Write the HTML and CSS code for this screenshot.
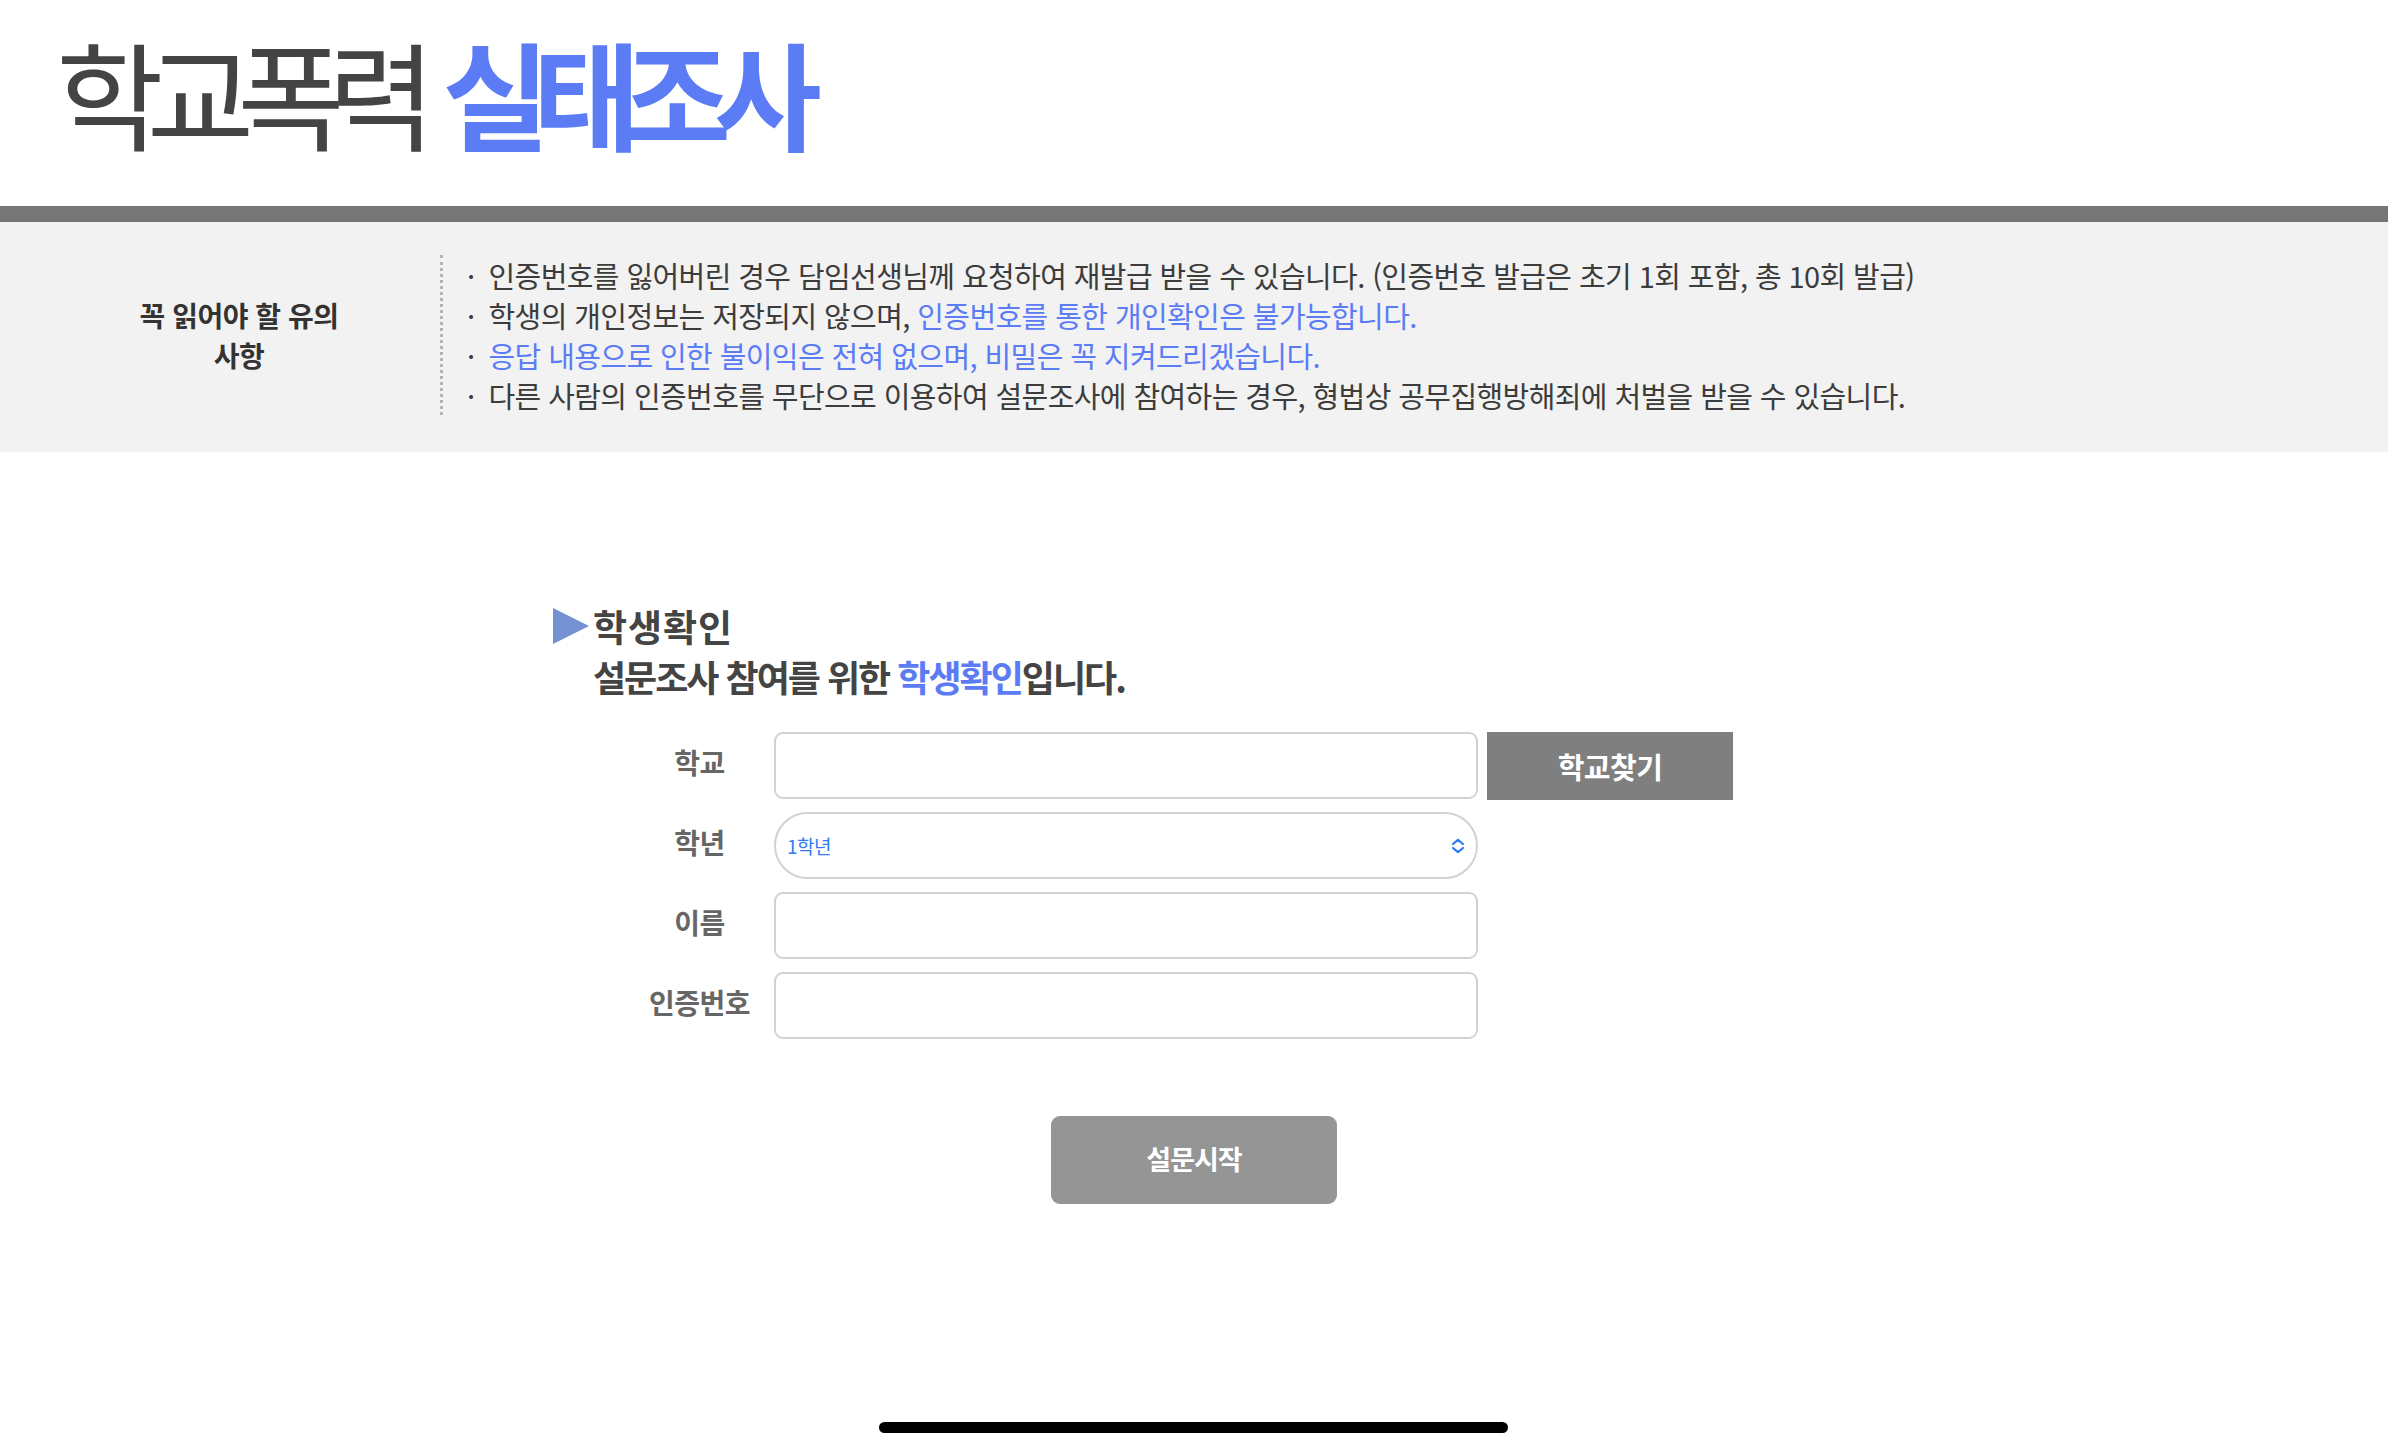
FILE: index.html
```html
<!DOCTYPE html>
<html lang="ko">
<head>
<meta charset="utf-8">
<title>학교폭력 실태조사</title>
<link rel="stylesheet" href="styles.css">
</head>
<body>
<header class="top">
  <h1 class="title"><span class="title-dark">학교폭력</span> <span class="title-blue">실태조사</span></h1>
</header>
<div class="rule"></div>
<section class="notice">
  <div class="notice-label"><p class="notice-label-text">꼭 읽어야 할 유의 사항</p></div>
  <ul class="notice-list">
    <li><span class="dot">·</span>인증번호를 잃어버린 경우 담임선생님께 요청하여 재발급 받을 수 있습니다. (인증번호 발급은 초기 1회 포함, 총 10회 발급)</li>
    <li><span class="dot">·</span>학생의 개인정보는 저장되지 않으며, <span class="blue">인증번호를 통한 개인확인은 불가능합니다.</span></li>
    <li><span class="dot">·</span><span class="blue">응답 내용으로 인한 불이익은 전혀 없으며, 비밀은 꼭 지켜드리겠습니다.</span></li>
    <li><span class="dot">·</span>다른 사람의 인증번호를 무단으로 이용하여 설문조사에 참여하는 경우, 형법상 공무집행방해죄에 처벌을 받을 수 있습니다.</li>
  </ul>
</section>
<main class="verify">
  <h2 class="verify-title"><span class="tri"></span>학생확인</h2>
  <p class="verify-sub">설문조사 참여를 위한 <span class="blue">학생확인</span>입니다.</p>
  <div class="form">
    <div class="row">
      <span class="label">학교</span>
      <div class="field"></div>
      <button class="find" type="button">학교찾기</button>
    </div>
    <div class="row">
      <span class="label">학년</span>
      <div class="field select">
        <span class="select-value">1학년</span>
        <svg class="chev" width="16" height="16" viewBox="0 0 16 16"><path d="M3 6 L8 1.8 L13 6 M3 10 L8 14.2 L13 10" fill="none" stroke="#2f7bf5" stroke-width="2.2" stroke-linecap="round" stroke-linejoin="round"/></svg>
      </div>
    </div>
    <div class="row">
      <span class="label">이름</span>
      <div class="field"></div>
    </div>
    <div class="row">
      <span class="label">인증번호</span>
      <div class="field"></div>
    </div>
  </div>
  <div class="actions"><button class="start" type="button">설문시작</button></div>
</main>
<div class="home-indicator"></div>
</body>
</html>
```
FILE: styles.css
```css
* { box-sizing: border-box; }
html, body { margin: 0; padding: 0; background: #fff; }
body {
  font-family: "Noto Sans CJK KR", "Noto Sans", sans-serif;
  color: #3c3c3c;
  width: 2388px;
  height: 1448px;
  overflow: hidden;
}
.blue { color: #5b7cf5; }

.top {
  height: 206px;
  padding: 33px 0 0 56px;
}
.title {
  margin: 0;
  font-size: 117px;
  line-height: 1;
  font-weight: 400;
  letter-spacing: -17px;
  word-spacing: 8px;
  white-space: nowrap;
}
.title-dark { color: #444; }
.title-blue { color: #5b7cf5; font-weight: 700; }

.rule { height: 16px; background: #767676; }

.notice {
  display: flex;
  background: #f2f2f2;
  padding: 33px 0 37px;
}
.notice-label {
  width: 440px;
  padding-left: 38px;
  display: flex;
  align-items: center;
  justify-content: center;
}
.notice-label-text {
  margin: 0;
  width: 220px;
  text-align: center;
  font-size: 28px;
  font-weight: 700;
  line-height: 40px;
  color: #333;
  letter-spacing: -0.5px;
}
.notice-list {
  margin: 0;
  padding: 0 0 0 24px;
  list-style: none;
  border-left: 3px dotted #b4b4b4;
  font-size: 29px;
  line-height: 40px;
  letter-spacing: -0.6px;
  color: #3c3c3c;
  white-space: nowrap;
}
.dot { margin-right: 14px; }

.verify {
  width: 1282px;
  margin: 149px auto 0;
}
.verify-title {
  margin: 0;
  display: flex;
  align-items: center;
  font-size: 37px;
  line-height: 50px;
  font-weight: 700;
  color: #444;
  letter-spacing: 1px;
}
.tri {
  width: 0;
  height: 0;
  border-top: 18px solid transparent;
  border-bottom: 18px solid transparent;
  border-left: 36px solid #7591d1;
  margin-right: 4px;
}
.verify-sub {
  margin: 0;
  padding-left: 40px;
  font-size: 36px;
  line-height: 50px;
  font-weight: 700;
  color: #444;
  letter-spacing: -2px;
}

.form {
  margin-top: 31px;
  display: flex;
  flex-direction: column;
  gap: 13px;
  padding-left: 72px;
}
.row {
  display: flex;
  align-items: center;
  height: 67px;
}
.label {
  width: 149px;
  text-align: center;
  font-size: 28px;
  font-weight: 700;
  color: #666;
  letter-spacing: -0.5px;
  margin-top: -8px;
}
.field {
  width: 704px;
  height: 67px;
  border: 2px solid #d2d2d2;
  border-radius: 9px;
  background: #fff;
}
.select {
  border-radius: 34px;
  display: flex;
  align-items: center;
  justify-content: space-between;
  padding: 0 10px 0 11px;
}
.select-value {
  font-size: 19px;
  color: #2f7bf5;
  letter-spacing: -0.5px;
}
.chev { display: block; }
.find {
  margin-left: 9px;
  width: 246px;
  height: 68px;
  border: 0;
  background: #7f7f7f;
  color: #fff;
  font-family: inherit;
  font-size: 29px;
  font-weight: 700;
  letter-spacing: -0.5px;
  padding: 0;
}
.actions {
  display: flex;
  justify-content: center;
  margin-top: 77px;
}
.start {
  width: 286px;
  height: 88px;
  border: 0;
  border-radius: 9px;
  background: #959595;
  color: #fff;
  font-family: inherit;
  font-size: 27px;
  font-weight: 700;
  letter-spacing: -1px;
  padding: 0 0 4px;
}
.home-indicator {
  position: fixed;
  left: 879px;
  bottom: 15px;
  width: 629px;
  height: 11px;
  border-radius: 6px;
  background: #000;
}
```
